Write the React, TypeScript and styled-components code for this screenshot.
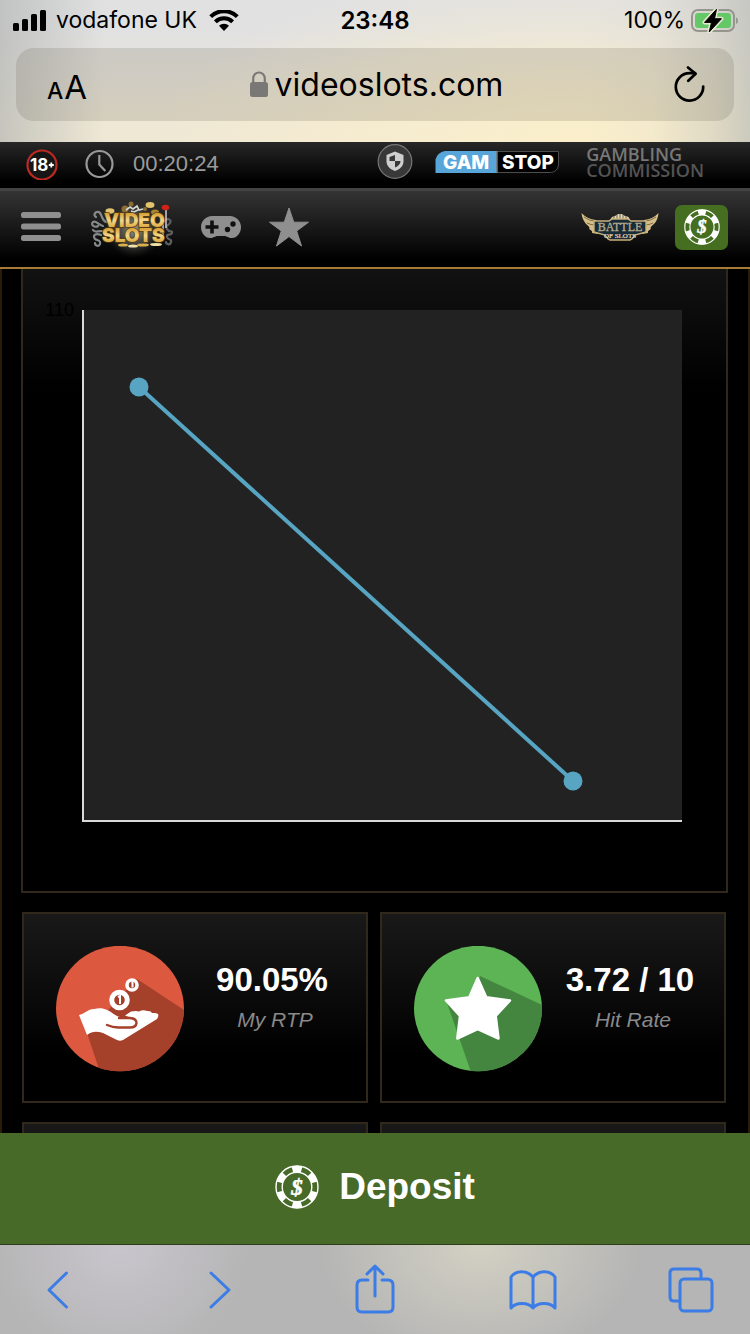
import React, { ReactNode } from 'react'
import styled, { createGlobalStyle, css } from 'styled-components'

const Font = {
    System: `Inter, Roboto, sans-serif`,
    Body: `'Liberation Sans', Arial, sans-serif`,
    Wide: `'Open Sans', 'Noto Sans', sans-serif`,
    Serif: `'Liberation Serif', serif`,
}

const Color = {
    Green: '#476a28',
    Gold: '#a67c35',
    Line: '#30281a',
    Blue: '#3b7ce6',
    Chart: '#57a5c2',
}

const GlobalStyle = createGlobalStyle`
    * {
        box-sizing: border-box;
    }
    body {
        margin: 0;
        background: #000;
        font-family: ${Font.Body};
    }
    svg {
        display: block;
        flex: none;
    }
`

const Page = styled.div`
    display: flex;
    flex-direction: column;
    height: 100vh;
    overflow: hidden;
`

const buttonReset = css`
    display: flex;
    align-items: center;
    justify-content: center;
    margin: 0;
    padding: 0;
    border: 0;
    background: none;
    color: inherit;
    font: inherit;
    cursor: pointer;
`

const IconButton = styled.button`
    ${buttonReset}
`

const IconLink = styled.a`
    display: block;
    color: inherit;
    text-decoration: none;
`

/* Browser chrome */

const Chrome = styled.header`
    flex: none;
    height: 142px;
    padding: 0 16px;
    color: #000;
    font-family: ${Font.System};
    background:
        linear-gradient(90deg, rgba(176, 178, 176, 0.65), rgba(190, 190, 186, 0) 14%),
        linear-gradient(270deg, rgba(186, 188, 182, 0.7), rgba(190, 190, 182, 0.4) 5%, rgba(200, 200, 190, 0.1) 13%, rgba(200, 200, 190, 0) 22%),
        radial-gradient(ellipse 420px 170px at 76% 100%, #fbefcb, rgba(250, 240, 208, 0)),
        linear-gradient(180deg, #e1e1e2 20%, #efe8d5 90%);
`

const StatusBar = styled.div`
    display: grid;
    grid-template-columns: 1fr auto 1fr;
    align-items: center;
    height: 40px;
    margin: 0 -4px;
    padding-top: 1px;
    font-size: 23px;
    line-height: 39px;
`

const StatusGroup = styled.div<{ $end?: boolean }>`
    display: flex;
    align-items: center;
    justify-content: ${({ $end }) => ($end ? 'flex-end' : 'flex-start')};
    gap: ${({ $end }) => ($end ? 6 : 10)}px;
`

const Clock = styled.time`
    font-size: 24px;
    font-weight: 600;
`

const AddressBar = styled.div`
    display: grid;
    grid-template-columns: 1fr auto 1fr;
    align-items: center;
    height: 73px;
    margin-top: 8px;
    padding: 0 28px 0 31px;
    border-radius: 18px;
    background: rgba(90, 84, 66, 0.17);
`

const TextSizeButton = styled.button`
    ${buttonReset}
    align-items: baseline;
    justify-self: start;
    gap: 1px;
    padding-top: 8px;
    font-size: 33px;
    line-height: 40px;

    small {
        font-size: 23px;
        font-weight: 500;
    }
`

const Address = styled.div`
    display: flex;
    align-items: center;
    gap: 7px;
    font-size: 32px;
    line-height: 40px;
`

const ReloadButton = styled(IconButton)`
    justify-self: end;
`

/* Site header */

const InfoBar = styled.div`
    display: flex;
    align-items: center;
    flex: none;
    height: 49px;
    padding: 0 46px 2px 26px;
    border-bottom: 3px solid #444;
    background: linear-gradient(#272727, #000 85%);
`

const SessionTime = styled.time`
    margin-left: 18px;
    color: #9b9b9b;
    font-size: 22px;
    line-height: 26px;
`

const InfoLinks = styled.nav`
    display: flex;
    align-items: center;
    gap: 22px;
    margin-left: auto;
    padding-bottom: 5px;
`

const Commission = styled.a`
    display: block;
    margin-left: 4px;
    color: #545454;
    font-family: ${Font.Wide};
    font-size: 18px;
    font-weight: 600;
    line-height: 16px;
    text-decoration: none;

    span {
        display: block;
    }
    span:first-child {
        color: #777;
    }
`

const NavBar = styled.nav`
    display: flex;
    align-items: center;
    flex: none;
    height: 78px;
    padding: 0 22px 4px 21px;
    border-bottom: 2px solid ${Color.Gold};
    color: #8f8f8f;
    background: linear-gradient(#343434, #000 90%);
`

const NavGroup = styled.div<{ $gap: number; $end?: boolean }>`
    display: flex;
    align-items: center;
    gap: ${({ $gap }) => $gap}px;
    margin-left: ${({ $end }) => ($end ? 'auto' : 0)};
`

const ChipButton = styled.button`
    ${buttonReset}
    width: 53px;
    height: 45px;
    border-radius: 7px;
    background: #456e20;
    color: #fff;
`

/* Content */

const Content = styled.main`
    flex: 1;
    min-height: 0;
    overflow: hidden;
    border: solid #2a1c08;
    border-width: 0 2px;
    background: #000;
`

const ChartCard = styled.section`
    display: grid;
    grid-template-columns: 59px 1fr;
    margin: 0 20px 19px 19px;
    padding: 31px 44px 69px 0;
    border: 2px solid ${Color.Line};
    border-top: 0;
    background: linear-gradient(#121212, #000 120px);
`

const AxisLabel = styled.div`
    padding-right: 8px;
    color: #000;
    font-size: 18px;
    line-height: 20px;
    text-align: right;
`

const Plot = styled.div`
    margin-top: 10px;
    border: solid #d9d9d9;
    border-width: 0 0 2px 2px;
    background: #222;

    svg {
        width: 100%;
        height: 510px;
        overflow: visible;
    }
`

const Stats = styled.section`
    display: grid;
    grid-template-columns: 1fr 1fr;
    gap: 19px 12px;
    padding: 0 22px 0 20px;
`

const StatCard = styled.article`
    display: flex;
    height: 191px;
    padding: 32px 0 0 32px;
    border: 2px solid ${Color.Line};
    background: linear-gradient(#19191a, #000 75%);
`

const StatText = styled.div`
    flex: 1;
    padding-top: 14px;
    text-align: center;
`

const StatValue = styled.div`
    padding-right: 6px;
    color: #fff;
    font-size: 33px;
    font-weight: 700;
    line-height: 40px;
`

const StatLabel = styled.div`
    margin-top: 8px;
    color: #8a8a8a;
    font-size: 21px;
    font-style: italic;
    line-height: 24px;
`

const DepositButton = styled.button`
    ${buttonReset}
    flex: none;
    gap: 20px;
    width: 100%;
    height: 112px;
    padding-bottom: 3px;
    border-bottom: 1px solid #2f3c1e;
    background: ${Color.Green};
    color: #fff;
    font-size: 37px;
    font-weight: 700;
`

const Toolbar = styled.footer`
    display: flex;
    align-items: center;
    justify-content: space-between;
    flex: none;
    height: 89px;
    padding: 0 27px 2px;
    color: ${Color.Blue};
    background:
        radial-gradient(ellipse 130px 120px at 16% 0, #c9c5cd, rgba(201, 197, 205, 0)),
        radial-gradient(ellipse 160px 120px at 64% 0, #d3d1c3, rgba(211, 209, 195, 0)),
        #b5b5b5;
`

const ToolButton = styled.button`
    ${buttonReset}
    width: 64px;
    height: 64px;
`

/* Icons */

const SignalIcon = () => (
    <svg width="34" height="22" viewBox="0 0 34 22" aria-hidden>
        <rect x="1" y="13" width="6" height="8" rx="1.5" />
        <rect x="10" y="9" width="6" height="12" rx="1.5" />
        <rect x="19" y="4" width="6" height="17" rx="1.5" />
        <rect x="28" y="0" width="6" height="21" rx="1.5" />
    </svg>
)

const WifiIcon = () => (
    <svg width="32" height="22" viewBox="-2 1 32 22" aria-hidden>
        <path d="m15 22-5-5.2a7 7 0 0 1 10 0Z" />
        <g fill="none" stroke="#000" strokeWidth="4">
            <path d="M6.4 12.8a12.2 12.2 0 0 1 17.2 0" />
            <path d="M1.7 7.6a19 19 0 0 1 26.6 0" />
        </g>
    </svg>
)

const boltPath = 'M25.5.3 13.5 13.4h7L18.2 23l12.3-13.3h-7Z'

const BatteryIcon = () => (
    <svg width="47" height="24" viewBox="0 0 47 24" strokeLinejoin="round" aria-hidden>
        <rect x="1" y="1" width="42" height="21" rx="6" fill="none" stroke="#94958d" strokeWidth="2" />
        <path d="M45 8.3v6.8q2-1 2-3.4t-2-3.4Z" fill="#94958d" />
        <rect x="4" y="4" width="36" height="15" rx="3" fill="#65c868" />
        <path d={boltPath} stroke="#e8ead0" strokeWidth="4" />
        <path d={boltPath} stroke="#000" />
    </svg>
)

const LockIcon = () => (
    <svg width="18" height="27" viewBox="0 0 18 27" aria-hidden>
        <rect y="11" width="18" height="15" rx="2.5" fill="#7a7876" />
        <path d="M3.2 12V7.5a5.8 6 0 0 1 11.6 0V12" fill="none" stroke="#7a7876" strokeWidth="2.2" />
    </svg>
)

const ReloadIcon = () => (
    <svg width="32" height="38" viewBox="0 0 32 38" fill="none" stroke="#000" strokeWidth="2.7" strokeLinecap="round" strokeLinejoin="round" aria-hidden>
        <path d="M29.2 20.5A13.7 13.7 0 1 1 15.5 7.2h5.5" />
        <path d="m14 1.500 7.600 6.300-7.300 7" />
    </svg>
)

const AdultIcon = () => (
    <svg width="32" height="32" viewBox="0 0 32 32" fontFamily={Font.System} fontWeight="700" fill="#fff" aria-hidden>
        <circle cx="16" cy="17" r="14.500" fill="#161616" stroke="#bd2a20" strokeWidth="2.2" />
        <text x="4" y="23" fontSize="17">18</text>
        <path d="M22.8 17h5M25.3 14.5v5" stroke="#fff" strokeWidth="1.8" />
    </svg>
)

const TimeIcon = () => (
    <svg width="30" height="30" viewBox="0 0 30 30" fill="none" stroke="#999" strokeWidth="2.2" aria-hidden>
        <circle cx="14.5" cy="15" r="13" />
        <path d="M14.3 6v9.5l6 6.5" />
    </svg>
)

const ShieldIcon = () => (
    <svg width="36" height="36" viewBox="0 0 36 36" aria-hidden>
        <circle cx="18" cy="17.500" r="16.800" fill="#383838" stroke="#777" strokeWidth="1.2" />
        <path d="m18 7.500 8.500 3.400v6.400c0 4.600-3.600 8.200-8.500 9.700-4.900-1.500-8.500-5.100-8.500-9.700v-6.400Z" fill="#cfcfcf" />
        <path d="M18 11v6h-5.500v-4ZM18 17h5.500c0 3-2.500 5.500-5.500 6.500Z" fill="#383838" />
    </svg>
)

const GamstopLogo = () => (
    <svg width="125" height="24" viewBox="0 0 125 24" fontFamily={Font.System} fontWeight="800" fontSize="19" fill="#fff" aria-hidden>
        <path d="M.5 23V9.5Q2.500 2 10 1h52v22Z" fill="#58a5da" />
        <path d="M62 1.500h61.500V15q-1 7-8 7.500H62Z" fill="#000" stroke="#4c4c4c" />
        <path d="M62 1v22" stroke="#888" />
        <text x="8" y="19">GAM</text>
        <text x="67" y="19">STOP</text>
    </svg>
)

const MenuIcon = () => (
    <svg width="40" height="30" viewBox="0 0 40 30" fill="#8f8f8f" aria-hidden>
        <rect y="0" width="40" height="6" rx="2.5" />
        <rect y="11.5" width="40" height="6" rx="2.5" />
        <rect y="23" width="40" height="6" rx="2.5" />
    </svg>
)

const VideoSlotsLogo = () => (
    <svg width="84" height="62" viewBox="0 0 84 62" fontFamily={Font.System} fontWeight="900" fontSize="19" aria-hidden>
        <defs>
            <radialGradient id="glow">
                <stop offset="0" stopColor="#9a9a90" />
                <stop offset="0.6" stopColor="#4a4a46" stopOpacity="0.7" />
                <stop offset="1" stopColor="#222" stopOpacity="0" />
            </radialGradient>
            <linearGradient id="gold" x1="0" y1="0" x2="0" y2="1">
                <stop offset="0.2" stopColor="#d8a23a" />
                <stop offset="0.5" stopColor="#f3d788" />
                <stop offset="0.8" stopColor="#dba740" />
            </linearGradient>
        </defs>
        <circle cx="45" cy="33" r="29" fill="url(#glow)" />
        <g fill="none" stroke="#85898a" strokeWidth="2.2" strokeLinecap="round">
            <path d="M17 26c-5-2-3-7-7-10-4-1-6 3-3 5M14 30c-5-1-7-6-10-4-3 3 2 6 5 4M13 35c-5 0-7 2-9-1M12 39c-5-2-9 0-6 4 3 2 6 1 5 5-1 3-5 2-5-1" />
            <path d="M75 25c4-4 8-1 6 2s-5 2-3 6 6 1 5 4-6 0-5 4 5 1 4 5-5 2-5 0" stroke="#5c6061" />
        </g>
        <g fill="#8b6d33">
            <circle cx="36" cy="13" r="3.5" />
            <circle cx="42" cy="8" r="2.500" />
            <circle cx="56" cy="13" r="2" />
        </g>
        <g fill="#e1c36d">
            <ellipse cx="61" cy="9" rx="4.5" ry="3" />
            <ellipse cx="66" cy="16" rx="4" ry="2.6" fill="#a9842e" />
            <ellipse cx="21" cy="15" rx="4.5" ry="2.8" />
        </g>
        <path d="m37 14 4-3 3 2 4-3 2 4 4-1M42 15l3 1 4-2" fill="none" stroke="#d6d6d2" strokeWidth="1.6" />
        <path d="M77 13v19M74 22v18" stroke="#d0d0d0" strokeWidth="1.5" />
        <ellipse cx="76.500" cy="11.500" rx="3.800" ry="2.700" fill="#d0231b" />
        <g fill="url(#gold)" stroke="#5a3d10" strokeWidth="1.4" paintOrder="stroke">
            <text x="15" y="31">VIDEO</text>
            <text x="13" y="46">SLOTS</text>
        </g>
        <g fill="#d8af4d">
            <ellipse cx="34" cy="49" rx="5" ry="1.6" />
            <ellipse cx="44" cy="50" rx="5" ry="1.6" fill="#f0dfa4" />
            <ellipse cx="54" cy="49" rx="6" ry="1.6" />
            <ellipse cx="67" cy="48.500" rx="6" ry="1.6" fill="#f0dfa4" />
        </g>
    </svg>
)

const GamepadIcon = () => (
    <svg width="40" height="24" viewBox="0 0 40 24" aria-hidden>
        <path
            d="M11 1h18c6 0 11 5 11 11s-4 11-9 11c-4 0-5-2-8-2h-6c-3 0-4 2-8 2-5 0-9-5-9-11S5 1 11 1Z"
            fill="currentColor"
        />
        <path d="M4.5 12h13M11 5.5v13" stroke="#111" strokeWidth="3.6" />
        <circle cx="26.5" cy="14.5" r="2.7" fill="#111" />
        <circle cx="32" cy="9" r="2.7" fill="#111" />
    </svg>
)

const StarIcon = () => (
    <svg width="40" height="40" viewBox="0 0 40 40" aria-hidden>
        <path
            d="m20 1 4.8 14.2H39.5L27.7 24 32.5 39 20 29.6 7.5 39 12.3 24 .5 15.2h14.7Z"
            fill="currentColor"
            stroke="currentColor"
            strokeLinejoin="round"
        />
    </svg>
)

const BattleLogo = () => (
    <svg width="78" height="30" viewBox="0 0 78 30" fontFamily={Font.Serif} textAnchor="middle" aria-hidden>
        <path d="M29 8q2-4 5-4l3-2h4l3 2q4 0 5 4Z" fill="#e2d8b4" />
        <path d="M33 4v4M36 2v5M39 2v5M42 2v5M45 4v4" stroke="#3a3226" strokeWidth="0.7" />
        <path
            d="M.5 1Q6 7 15 8l2 14-6-1q1-2-3-4 2-1-3-5Q1 7 .5 1ZM77.500 1Q72 7 63 8l-2 14 6-1q-1-2 3-4-2-1 3-5 4-4 4.500-11Z"
            fill="#d4be88"
        />
        <path d="M3 5q6 4 10 4M6 11q4 2 8 2M75 5q-6 4-10 4M72 11q-4 2-8 2" fill="none" stroke="#6b5731" strokeWidth="0.8" />
        <path d="M13 9h15l3-2h16l3 2h15v11l-11 3-3 4-2 1H29l-2-1-3-4-11-3Z" fill="#182b38" stroke="#c9b079" strokeWidth="1.4" />
        <text x="39" y="19" fontSize="12" fill="#b9ae8c" stroke="#b9ae8c" strokeWidth="0.3">BATTLE</text>
        <text x="39" y="26" fontSize="7" fill="#e8dec0" stroke="#e8dec0" strokeWidth="0.2">OF SLOTS</text>
    </svg>
)

const ChipIcon = ({ size = 44 }: { size?: number }) => (
    <svg width={size} height={size} viewBox="0 0 44 44" fill="none" stroke="currentColor" aria-hidden>
        <circle cx="22" cy="22" r="21" strokeWidth="1.4" />
        <circle cx="22" cy="22" r="14.8" strokeWidth="1.4" />
        <circle cx="22" cy="22" r="18" strokeWidth="6.5" pathLength="12" strokeDasharray="1 1" strokeDashoffset="0.5" transform="rotate(-90 22 22)" />
        <text x="22" y="29.5" fontFamily={Font.Serif} fontSize="23" fontStyle="italic" fontWeight="700" textAnchor="middle" fill="currentColor" strokeWidth="0.5">
            $
        </text>
    </svg>
)

const RtpIcon = () => (
    <svg width="128" height="126" viewBox="0 0 128 126" aria-hidden>
        <clipPath id="rtp">
            <ellipse cx="64" cy="62.5" rx="64" ry="62.7" />
        </clipPath>
        <g clipPath="url(#rtp)">
            <path d="M0 0h128v126H0Z" fill="#dc583e" />
            <path d="m81 33 47 31v62H44L31 87l24-26Z" fill="#a5402b" />
        </g>
        <path
            d="M23 69c5-1 9-6 15-6 5-1 9-1 13 1 5 2 8 6 13 7h9q-2-1-4-1.5l6-4q5-1 8 0 4-2 8-.5 4-.5 5 2 4-.5 6 1 1 2-1 5L67 94q-3 1.5-6 0l-14-7c-6-2-11-2-16 2Z"
            fill="#fff"
        />
        <path d="M51 79q6 2.5 11 2.5h12q6 0 6.5-4.500 0-4.500-6.500-5H63" fill="none" stroke="#a5402b" strokeWidth="2.4" strokeLinecap="round" />
        <g fill="#a5402b" stroke="#fff">
            <circle cx="63.5" cy="54" r="7.8" strokeWidth="5" />
            <circle cx="76" cy="39" r="5" strokeWidth="3.6" />
        </g>
        <path d="m62 51 2-1v8M75.500 37.500l1-.5v4.500" fill="none" stroke="#fff" strokeWidth="2" />
    </svg>
)

const HitRateIcon = () => (
    <svg width="128" height="126" viewBox="0 0 128 126" aria-hidden>
        <clipPath id="hit">
            <ellipse cx="64" cy="62.5" rx="64" ry="62.7" />
        </clipPath>
        <g clipPath="url(#hit)">
            <path d="M0 0h128v126H0Z" fill="#5cb454" />
            <path d="m66 30 62 29v67H57L32 54l28-5Z" fill="#44853f" />
        </g>
        <path
            d="m63.7 32 8.6 19.2L96 54.5 81.7 70 84.5 92.5 63.7 83 43.3 92.5 46 70 32 54.5l23.3-3.3Z"
            fill="#fff"
            stroke="#fff"
            strokeWidth="2.5"
            strokeLinejoin="round"
        />
    </svg>
)

const ToolIcon = ({ children }: { children: ReactNode }) => (
    <svg width="56" height="56" viewBox="0 0 56 56" fill="none" stroke="currentColor" strokeWidth="3" strokeLinecap="round" strokeLinejoin="round" aria-hidden>
        {children}
    </svg>
)

const stats = [
    { label: 'My RTP', value: '90.05%', icon: <RtpIcon /> },
    { label: 'Hit Rate', value: '3.72 / 10', icon: <HitRateIcon /> },
]

const points = [
    { x: 55, y: 77 },
    { x: 489, y: 471 },
]

const tools = [
    { name: 'Back', icon: <path d="M35.5 12 18 29l17.5 17" /> },
    { name: 'Forward', icon: <path d="m22 12 18 17-18 17" /> },
    {
        name: 'Share',
        icon: <path d="M21 19h-6q-5 0-5 5v22q0 5 5 5h26q5 0 5-5V24q0-5-5-5h-6M28 35V5M20 13l8-8 8 8" />,
    },
    {
        name: 'Bookmarks',
        icon: <path d="M28 16c-6-7-17-7-22 0v31c5-6 17-6 22 0 5-6 17-6 22 0V16c-5-7-16-7-22 0v31" />,
    },
    {
        name: 'Tabs',
        icon: (
            <>
                <rect x="17" y="18" width="32" height="32" rx="4" />
                <path d="M16 40h-5q-4 0-4-4V12q0-4 4-4h23q4 0 4 4v5" />
            </>
        ),
    },
]

export default function App() {
    return (
        <>
            <GlobalStyle />
            <Page>
                <Chrome>
                    <StatusBar>
                        <StatusGroup>
                            <SignalIcon />
                            <span>vodafone UK</span>
                            <WifiIcon />
                        </StatusGroup>
                        <Clock>23:48</Clock>
                        <StatusGroup $end>
                            <span>100%</span>
                            <BatteryIcon />
                        </StatusGroup>
                    </StatusBar>
                    <AddressBar>
                        <TextSizeButton type="button">
                            <small>A</small>A
                        </TextSizeButton>
                        <Address>
                            <LockIcon />
                            videoslots.com
                        </Address>
                        <ReloadButton type="button" aria-label="Reload">
                            <ReloadIcon />
                        </ReloadButton>
                    </AddressBar>
                </Chrome>

                <InfoBar>
                    <NavGroup $gap={27}>
                        <AdultIcon />
                        <TimeIcon />
                    </NavGroup>
                    <SessionTime>00:20:24</SessionTime>
                    <InfoLinks>
                        <IconLink href="#safety" aria-label="Responsible gaming">
                            <ShieldIcon />
                        </IconLink>
                        <IconLink href="#gamstop" aria-label="GamStop">
                            <GamstopLogo />
                        </IconLink>
                        <Commission href="#commission">
                            <span>GAMBLING</span>
                            <span>COMMISSION</span>
                        </Commission>
                    </InfoLinks>
                </InfoBar>

                <NavBar>
                    <NavGroup $gap={28}>
                        <IconButton type="button" aria-label="Menu">
                            <MenuIcon />
                        </IconButton>
                        <IconLink href="#home" aria-label="Videoslots">
                            <VideoSlotsLogo />
                        </IconLink>
                        <IconLink href="#games" aria-label="Games">
                            <GamepadIcon />
                        </IconLink>
                        <IconLink href="#favourites" aria-label="Favourites">
                            <StarIcon />
                        </IconLink>
                    </NavGroup>
                    <NavGroup $gap={16} $end>
                        <IconLink href="#battle" aria-label="Battle of Slots">
                            <BattleLogo />
                        </IconLink>
                        <ChipButton type="button" aria-label="Quick deposit">
                            <ChipIcon size={36} />
                        </ChipButton>
                    </NavGroup>
                </NavBar>

                <Content>
                    <ChartCard>
                        <AxisLabel>110</AxisLabel>
                        <Plot>
                            <svg viewBox="0 0 598 510" preserveAspectRatio="none" role="img" aria-label="RTP over time">
                                <polyline
                                    points={points.map(({ x, y }) => `${x},${y}`).join(' ')}
                                    fill="none"
                                    stroke={Color.Chart}
                                    strokeWidth="4"
                                />
                                {points.map(({ x, y }) => (
                                    <circle key={x} cx={x} cy={y} r="9.5" fill={Color.Chart} />
                                ))}
                            </svg>
                        </Plot>
                    </ChartCard>
                    <Stats>
                        {stats.map(({ label, value, icon }) => (
                            <StatCard key={label}>
                                {icon}
                                <StatText>
                                    <StatValue>{value}</StatValue>
                                    <StatLabel>{label}</StatLabel>
                                </StatText>
                            </StatCard>
                        ))}
                        <StatCard />
                        <StatCard />
                    </Stats>
                </Content>

                <DepositButton type="button">
                    <ChipIcon />
                    Deposit
                </DepositButton>

                <Toolbar>
                    {tools.map(({ name, icon }) => (
                        <ToolButton key={name} type="button" aria-label={name}>
                            <ToolIcon>{icon}</ToolIcon>
                        </ToolButton>
                    ))}
                </Toolbar>
            </Page>
        </>
    )
}
